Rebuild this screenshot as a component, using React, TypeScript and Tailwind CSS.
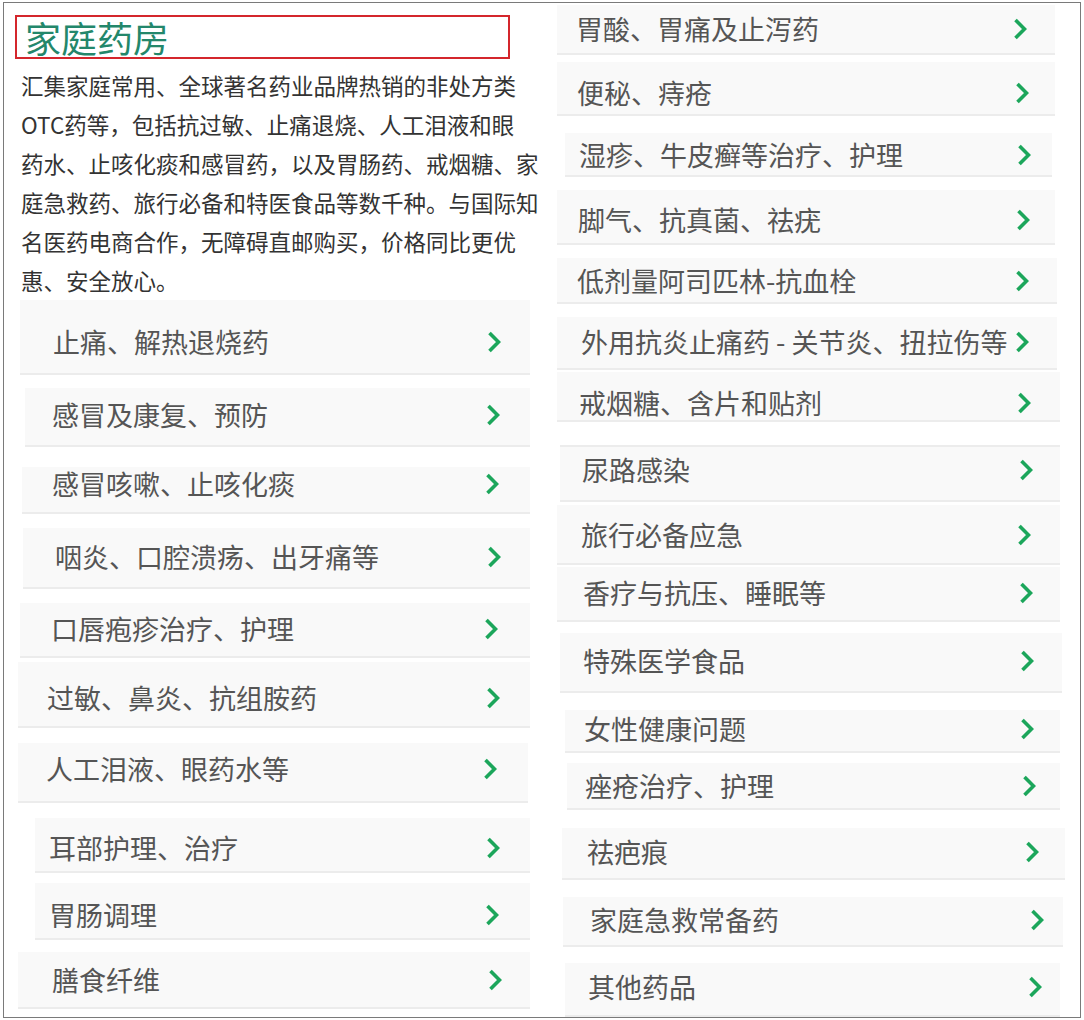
import React from 'react'

type Row = { label: string; box: string; inner: string }

// left column rows, offsets measured from the column's left edge (x=15)
const LEFT_ROWS: Row[] = [
  { label: '止痛、解热退烧药', box: 'mt-0 h-[75px] ml-[5px] w-[510px]', inner: 'mt-[27px] pl-[33px] pr-[29px]' },
  { label: '感冒及康复、预防', box: 'mt-[13px] h-[59px] ml-[10px] w-[505px]', inner: 'mt-[12px] pl-[27px] pr-[30px]' },
  { label: '感冒咳嗽、止咳化痰', box: 'mt-[20px] h-[47px] ml-[7px] w-[508px]', inner: 'mt-[2px] pl-[30px] pr-[31px]' },
  { label: '咽炎、口腔溃疡、出牙痛等', box: 'mt-[14px] h-[61px] ml-[8px] w-[507px]', inner: 'mt-[14px] pl-[32px] pr-[29px]' },
  { label: '口唇疱疹治疗、护理', box: 'mt-[14px] h-[55px] ml-[5px] w-[510px]', inner: 'mt-[11px] pl-[31px] pr-[32px]' },
  { label: '过敏、鼻炎、抗组胺药', box: 'mt-[4px] h-[66px] ml-[3px] w-[512px]', inner: 'mt-[21px] pl-[29px] pr-[30px]' },
  { label: '人工泪液、眼药水等', box: 'mt-[15px] h-[60px] ml-[3px] w-[510px]', inner: 'mt-[11px] pl-[28px] pr-[31px]' },
  { label: '耳部护理、治疗', box: 'mt-[15px] h-[55px] ml-[20px] w-[495px]', inner: 'mt-[15px] pl-[14px] pr-[30px]' },
  { label: '胃肠调理', box: 'mt-[10px] h-[57px] ml-[20px] w-[495px]', inner: 'mt-[17px] pl-[14px] pr-[31px]' },
  { label: '膳食纤维', box: 'mt-[12px] h-[57px] ml-[3px] w-[512px]', inner: 'mt-[13px] pl-[34px] pr-[28px]' },
]

// right column rows, offsets from x=557
const RIGHT_ROWS: Row[] = [
  { label: '胃酸、胃痛及止泻药', box: 'mt-[2px] h-[50px] ml-0 w-[498px]', inner: 'mt-[9px] pl-[19px] pr-[28px]' },
  { label: '便秘、痔疮', box: 'mt-[7px] h-[54px] ml-0 w-[498px]', inner: 'mt-[16px] pl-[20px] pr-[26px]' },
  { label: '湿疹、牛皮癣等治疗、护理', box: 'mt-[17px] h-[44px] ml-[8px] w-[487px]', inner: 'mt-[7px] pl-[14px] pr-[21px]' },
  { label: '脚气、抗真菌、祛疣', box: 'mt-[13px] h-[55px] ml-0 w-[498px]', inner: 'mt-[15px] pl-[21px] pr-[25px]' },
  { label: '低剂量阿司匹林-抗血栓', box: 'mt-[13px] h-[46px] ml-0 w-[500px]', inner: 'mt-[8px] pl-[20px] pr-[28px]' },
  { label: '外用抗炎止痛药 - 关节炎、扭拉伤等', box: 'mt-[13px] h-[53px] ml-0 w-[500px]', inner: 'mt-[10px] pl-[24px] pr-[28px]' },
  { label: '戒烟糖、含片和贴剂', box: 'mt-[2px] h-[50px] ml-0 w-[503px] border-b-0', inner: 'mt-[16px] pl-[22px] pr-[29px]' },
  { label: '尿路感染', box: 'mt-[23px] h-[57px] ml-[3px] w-[500px] border-t-2 border-t-[#ececec]', inner: 'mt-[8px] pl-[22px] pr-[27px]' },
  { label: '旅行必备应急', box: 'mt-[3px] h-[60px] ml-0 w-[503px]', inner: 'mt-[15px] pl-[24px] pr-[29px]' },
  { label: '香疗与抗压、睡眠等', box: 'mt-[2px] h-[55px] ml-0 w-[503px]', inner: 'mt-[11px] pl-[26px] pr-[27px]' },
  { label: '特殊医学食品', box: 'mt-[11px] h-[60px] ml-[3px] w-[502px]', inner: 'mt-[13px] pl-[23px] pr-[28px]' },
  { label: '女性健康问题', box: 'mt-[17px] h-[43px] ml-[8px] w-[495px]', inner: 'mt-[4px] pl-[19px] pr-[26px]' },
  { label: '痤疮治疗、护理', box: 'mt-[10px] h-[47px] ml-[10px] w-[493px]', inner: 'mt-[8px] pl-[18px] pr-[24px]' },
  { label: '祛疤痕', box: 'mt-[18px] h-[52px] ml-[5px] w-[503px]', inner: 'mt-[9px] pl-[25px] pr-[26px]' },
  { label: '家庭急救常备药', box: 'mt-[17px] h-[50px] ml-[6px] w-[500px]', inner: 'mt-[8px] pl-[27px] pr-[19px]' },
  { label: '其他药品', box: 'mt-[16px] h-[54px] ml-[8px] w-[495px] border-b-0', inner: 'mt-[9px] pl-[23px] pr-[18px]' },
]

function Chevron() {
  return (
    <svg width="14" height="22" viewBox="0 0 14 22" className="shrink-0">
      <polyline points="2.5,2 11.5,11 2.5,20" fill="none" stroke="#1ca65b" strokeWidth={3.6} />
    </svg>
  )
}

function CategoryRow({ row }: { row: Row }) {
  return (
    <a href="#" className={`block shrink-0 bg-[#f9f9f9] border-b-2 border-[#ececec] ${row.box}`}>
      <div className={`flex h-[30px] items-center justify-between ${row.inner}`}>
        <span className="whitespace-nowrap text-[27px] leading-[30px] text-[#555555]">{row.label}</span>
        <Chevron />
      </div>
    </a>
  )
}

export default function App() {
  return (
    <div
      className="w-[1084px] h-[1020px] bg-white pt-[2px] pl-[3px]"
      style={{ fontFamily: '"Microsoft YaHei", "Noto Sans CJK SC", "Noto Sans", sans-serif' }}
    >
      <div className="w-[1078px] h-[1016px] border border-[#7a7a7a] flex overflow-hidden">
        {/* left: heading, intro, first list */}
        <div className="ml-[11px] w-[542px] shrink-0 flex flex-col">
          <div className="mt-[12px] h-[44px] w-[495px] ml-0 border-2 border-[#d4262c] flex items-center pl-[8px]">
            <h2 className="text-[36px] leading-none font-normal text-[#23876b]">家庭药房</h2>
          </div>
          <p className="mt-[7px] ml-[6px] w-[519px] text-[22.5px] leading-[39px] text-[#333333]">
            汇集家庭常用、全球著名药业品牌热销的非处方类OTC药等，包括抗过敏、止痛退烧、人工泪液和眼<br />药水、止咳化痰和感冒药，以及胃肠药、戒烟糖、家庭急救药、旅行必备和特医食品等数千种。与国际知名医药电商合作，无障碍直邮购买，价格同比更优惠、安全放心。
          </p>
          {LEFT_ROWS.map((row) => (
            <CategoryRow key={row.label} row={row} />
          ))}
        </div>

        {/* right list */}
        <div className="w-[520px] shrink-0 flex flex-col">
          {RIGHT_ROWS.map((row) => (
            <CategoryRow key={row.label} row={row} />
          ))}
        </div>
      </div>
    </div>
  )
}
